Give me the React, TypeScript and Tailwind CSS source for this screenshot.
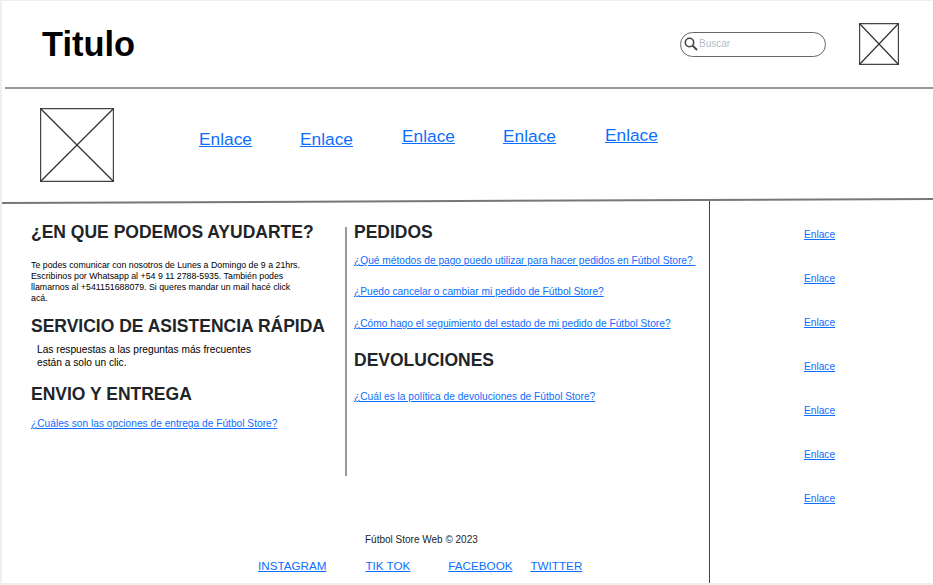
const XBox = ({ className }: { className: string }) => (
  <svg className={className} viewBox="0 0 100 100" preserveAspectRatio="none">
    <rect x="0" y="0" width="100" height="100" fill="#fff" stroke="#444" strokeWidth="2.4" vectorEffect="non-scaling-stroke" />
    <line x1="0" y1="0" x2="100" y2="100" stroke="#333" strokeWidth="1.3" vectorEffect="non-scaling-stroke" />
    <line x1="100" y1="0" x2="0" y2="100" stroke="#333" strokeWidth="1.3" vectorEffect="non-scaling-stroke" />
  </svg>
);

const A = ({ className, children }: { className: string; children: React.ReactNode }) => (
  <a href="#" className={"block whitespace-pre text-[#0d6efd] underline " + className}>
    {children}
  </a>
);

const H = ({ className, children }: { className: string; children: React.ReactNode }) => (
  <h2 className={"text-[17.5px] leading-[20px] font-bold text-[#212529] whitespace-nowrap " + className}>{children}</h2>
);

const sideLinks = [1, 2, 3, 4, 5, 6, 7];

export default function App() {
  return (
    <div className="box-border flex h-[585px] w-[933px] flex-col overflow-hidden border-t border-b-2 border-l-2 border-[#eeeeee] bg-white font-['Liberation_Sans',Arial,sans-serif] text-black">
      <header className="flex h-[86px] shrink-0 items-center pr-[34px] pl-[40px]">
        <h1 className="text-[34.4px] leading-[40px] font-bold text-black">Titulo</h1>
        <div className="ml-auto flex h-[25px] w-[146px] items-center rounded-full border border-[#666] pl-[3px]">
          <svg className="h-[14px] w-[14px] shrink-0" viewBox="0 0 14 14" fill="none" stroke="#444">
            <circle cx="5.5" cy="5.5" r="4.2" strokeWidth="1.6" />
            <line x1="8.6" y1="8.6" x2="13" y2="13" strokeWidth="2" />
          </svg>
          <span className="ml-[1px] text-[10px] leading-none text-[#b4bcc6]">Buscar</span>
        </div>
        <XBox className="ml-[33px] h-[42px] w-[40px] shrink-0" />
      </header>
      <div className="ml-[3px] h-[2px] shrink-0 bg-[#999]" />
      <nav className="flex h-[111px] shrink-0 items-start pt-[19px] pl-[38px] text-[17.33px] leading-[20px]">
        <XBox className="h-[74px] w-[74px] shrink-0" />
        <A className="mt-[21px] ml-[85px]">Enlace</A>
        <A className="mt-[21px] ml-[48px]">Enlace</A>
        <A className="mt-[18px] ml-[49px]">Enlace</A>
        <A className="mt-[18px] ml-[48px]">Enlace</A>
        <A className="mt-[17px] ml-[49px]">Enlace</A>
      </nav>
      <div className="h-[2px] shrink-0 -rotate-[0.25deg] bg-[#777]" />
      <div className="flex min-h-0 flex-1">
        <main className="w-[707px] shrink-0">
          <div className="flex h-[274px]">
            <section className="w-[343px] shrink-0 pt-[20px] pl-[29px]">
              <H className="">¿EN QUE PODEMOS AYUDARTE?</H>
              <p className="mt-[18px] text-[8.8px] leading-[11px] whitespace-nowrap text-black">
                Te podes comunicar con nosotros de Lunes a Domingo de 9 a 21hrs.
                <br />
                Escribinos por Whatsapp al +54 9 11 2788-5935. También podes
                <br />
                llamarnos al +541151688079. Si queres mandar un mail hacé click
                <br />
                acá.
              </p>
              <H className="mt-[12px]">SERVICIO DE ASISTENCIA RÁPIDA</H>
              <p className="mt-[7px] ml-[6px] text-[10.2px] leading-[13px] whitespace-nowrap text-black">
                Las respuestas a las preguntas más frecuentes
                <br />
                están a solo un clic.
              </p>
              <H className="mt-[15px]">ENVIO Y ENTREGA</H>
              <A className="mt-[14px] text-[10.2px] leading-[12px]">¿Cuáles son las opciones de entrega de Fútbol Store?</A>
            </section>
            <div className="mt-[25px] h-[249px] w-[2px] shrink-0 bg-[#999]" />
            <section className="ml-[7px] pt-[20px]">
              <H className="">PEDIDOS</H>
              <A className="mt-[13px] text-[10.2px] leading-[12px]">¿Qué métodos de pago puedo utilizar para hacer pedidos en Fútbol Store? </A>
              <A className="mt-[19px] text-[10.2px] leading-[12px]">¿Puedo cancelar o cambiar mi pedido de Fútbol Store?</A>
              <A className="mt-[20px] text-[10.2px] leading-[12px]">¿Cómo hago el seguimiento del estado de mi pedido de Fútbol Store?</A>
              <H className="mt-[20px]">DEVOLUCIONES</H>
              <A className="mt-[21px] text-[10.2px] leading-[12px]">¿Cuál es la política de devoluciones de Fútbol Store?</A>
            </section>
          </div>
          <footer className="mt-[58px]">
            <p className="ml-[363px] text-[10px] leading-[12px] text-[#212529]">Fútbol Store Web © 2023</p>
            <div className="mt-[13px] flex pl-[256px] text-[11.67px] leading-[14px]">
              <A className="">INSTAGRAM</A>
              <A className="ml-[39px]">TIK TOK</A>
              <A className="ml-[38px]">FACEBOOK</A>
              <A className="ml-[18px]">TWITTER</A>
            </div>
          </footer>
        </main>
        <aside className="-mt-[2px] flex flex-1 flex-col items-center gap-[32px] border-l border-[#444] pt-[29px] pr-[4px] text-[10.2px] leading-[12px]">
          {sideLinks.map((n) => (
            <A key={n} className="">
              Enlace
            </A>
          ))}
        </aside>
      </div>
    </div>
  );
}
